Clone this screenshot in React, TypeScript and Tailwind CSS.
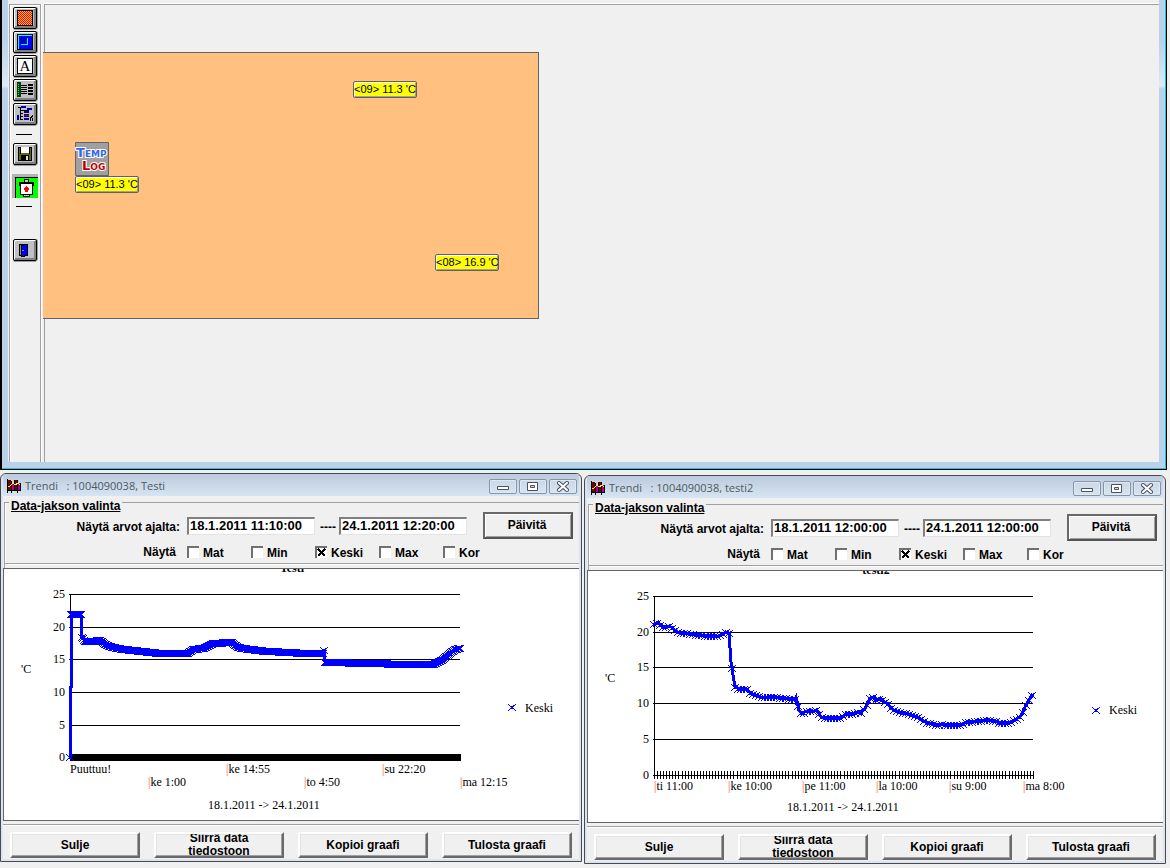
import type { ReactNode } from "react";

type Point = [number, number];

interface AxisLabel {
  x: number;
  y: number;
  text: string;
  tick?: boolean;
}

interface TrendChart {
  title: string;
  grid: number[];
  right: number;
  unitY: number;
  labels: AxisLabel[];
  rangeX: number;
  legendY: number;
  step: number;
  points: Point[];
  denseAxis: boolean;
}

interface Trend {
  id: string;
  name: string;
  from: string;
  to: string;
  chart: TrendChart;
}

const AXIS_VALUES = [25, 20, 15, 10, 5, 0];
const AXIS_LEFT = 66;

const trends: Trend[] = [
  {
    id: "t1",
    name: "Testi",
    from: "18.1.2011 11:10:00",
    to: "24.1.2011 12:20:00",
    chart: {
      title: "Testi",
      grid: [25, 58, 90, 123, 156, 188],
      right: 456,
      unitY: 104,
      rangeX: 204,
      legendY: 138,
      step: 1,
      denseAxis: true,
      labels: [
        { x: 66, y: 204, text: "Puuttuu!" },
        { x: 144, y: 217, text: "ke 1:00", tick: true },
        { x: 222, y: 204, text: "ke 14:55", tick: true },
        { x: 300, y: 217, text: "to 4:50", tick: true },
        { x: 378, y: 204, text: "su 22:20", tick: true },
        { x: 456, y: 217, text: "ma 12:15", tick: true },
      ],
      points: [
        [67, 45], [77, 45], [78, 68], [81, 72], [88, 72], [96, 71], [103, 76], [113, 79],
        [129, 81], [156, 84], [184, 84], [189, 80], [199, 79], [209, 74], [228, 73],
        [234, 78], [246, 80], [263, 82], [286, 83], [299, 84], [319, 84], [320, 81],
        [321, 93], [369, 94], [399, 95], [429, 95], [439, 90], [446, 84], [451, 80], [456, 79],
      ],
    },
  },
  {
    id: "t2",
    name: "testi2",
    from: "18.1.2011 12:00:00",
    to: "24.1.2011 12:00:00",
    chart: {
      title: "testi2",
      grid: [25, 61, 96, 132, 168, 204],
      right: 445,
      unitY: 111,
      rangeX: 199,
      legendY: 139,
      step: 3,
      denseAxis: false,
      labels: [
        { x: 66, y: 219, text: "ti 11:00", tick: true },
        { x: 140, y: 219, text: "ke 10:00", tick: true },
        { x: 214, y: 219, text: "pe 11:00", tick: true },
        { x: 288, y: 219, text: "la 10:00", tick: true },
        { x: 361, y: 219, text: "su 9:00", tick: true },
        { x: 435, y: 219, text: "ma 8:00", tick: true },
      ],
      points: [
        [66, 53], [70, 51], [73, 55], [77, 57], [80, 55], [83, 56], [87, 59], [90, 61],
        [96, 62], [103, 63], [111, 64], [121, 65], [131, 65], [134, 63], [139, 61], [141, 62],
        [143, 91], [147, 116], [151, 118], [159, 118], [163, 123], [168, 124], [173, 126],
        [188, 126], [194, 127], [207, 128], [208, 126], [211, 139], [214, 143], [218, 140],
        [226, 140], [229, 139], [233, 146], [238, 147], [253, 147], [259, 142], [263, 143],
        [269, 141], [273, 142], [278, 136], [282, 127], [285, 126], [288, 129], [292, 127],
        [295, 130], [299, 132], [303, 137], [307, 140], [312, 141], [317, 142], [324, 144],
        [330, 146], [335, 150], [340, 152], [344, 152], [349, 155], [352, 153], [357, 154],
        [372, 154], [379, 151], [389, 150], [399, 149], [407, 150], [412, 152], [420, 152],
        [425, 150], [433, 145], [437, 136], [442, 127], [445, 123],
      ],
    },
  },
];

// Linear interpolation between the logged points, one sample per step.
function sample(points: Point[], step: number): Point[] {
  const out: Point[] = [];
  const end = points[points.length - 1][0];
  let i = 0;
  for (let x = points[0][0]; x <= end; x += step) {
    while (i < points.length - 2 && points[i + 1][0] < x) i++;
    const [x0, y0] = points[i];
    const [x1, y1] = points[i + 1];
    out.push([x, Math.round(y0 + ((y1 - y0) * (x - x0)) / (x1 - x0))]);
  }
  return out;
}

function cross([x, y]: Point) {
  return `M${x - 4} ${y - 3}L${x + 4} ${y + 4}M${x + 4} ${y - 3}L${x - 4} ${y + 4}`;
}

function Chart({ chart }: { chart: TrendChart }) {
  const { grid, right, labels, points } = chart;
  const bottom = grid[grid.length - 1];
  const line = `M${points.map((p) => p.join(" ")).join("L")}`;
  const ticks: string[] = [];
  for (let i = 0; i <= 124; i++) {
    const x = Math.round(AXIS_LEFT + (i * (right - AXIS_LEFT)) / 124) + 0.5;
    ticks.push(`M${x} ${bottom - 4}V${bottom + 4}`);
  }

  return (
    <svg
      viewBox="0 0 575 251"
      className="block w-full bg-white font-['Liberation_Serif',serif] text-[12px] font-normal"
      role="img"
      aria-label={chart.title}
    >
      <text x="288" y="3" textAnchor="middle" fontWeight="bold">
        {chart.title}
      </text>
      <g shapeRendering="crispEdges" fill="none" stroke="#000">
        {grid.map((y) => (
          <path key={y} d={`M${AXIS_LEFT - 1} ${y + 0.5}H${right}`} />
        ))}
        <path d={`M${AXIS_LEFT + 0.5} ${grid[0]}V${bottom}`} />
        {chart.denseAxis ? (
          <path d={`M${AXIS_LEFT} ${bottom + 0.5}H${right + 1}`} strokeWidth="7" />
        ) : (
          <path d={ticks.join("")} />
        )}
      </g>
      <g shapeRendering="crispEdges" fill="none" stroke="#00f">
        {chart.denseAxis && (
          <>
            <path d="M66.5 190V117M67.5 119V44" strokeWidth="3" />
            <path d={cross([66, 188])} />
            <path d="M82 72H88L96 71L103 76L113 79L129 81L156 84H184L189 80L199 79L209 74L228 73L234 78L246 80L263 82L299 84H319M321 93L399 95H429L439 90L446 84" strokeWidth="6" />
          </>
        )}
        <path d={line} strokeWidth="3" />
        <path d={sample(points, chart.step).map(cross).join("")} />
      </g>
      {AXIS_VALUES.map((value, i) => (
        <text key={value} x="61" y={grid[i] + 4} textAnchor="end">
          {value}
        </text>
      ))}
      {labels.map((label) => (
        <text key={label.text} x={label.x} y={label.y}>
          {label.tick && <tspan fill="#f06030">|</tspan>}
          {label.text}
        </text>
      ))}
      <text x="17" y={chart.unitY}>
        'C
      </text>
      <text x={chart.rangeX} y="240">
        {"18.1.2011 -> 24.1.2011"}
      </text>
      <path d={cross([508, chart.legendY])} stroke="#00f" shapeRendering="crispEdges" />
      <text x="521" y="143">
        Keski
      </text>
    </svg>
  );
}

function TrendIcon() {
  return (
    <svg width="14" height="14" viewBox="0 0 14 14" shapeRendering="crispEdges" aria-hidden="true">
      <path fill="#700" d="M1 1h3v11H1z" />
      <path fill="#a0a" d="M5 4h2v8H5zM11 4h2v8h-2z" />
      <path fill="#700" d="M8 1h2v11H8z" />
      <path stroke="#000" d="M.5 0v14M0 11.5h14M4.5 2v12M7.500 1v11M10.500 1v13M13.500 4v8" />
      <path stroke="#ff0" fill="none" d="M1 8l2-1 3-3 2 2 3-2 2 2" />
    </svg>
  );
}

function CaptionButton({ label, children }: { label: string; children: ReactNode }) {
  return (
    <button
      type="button"
      aria-label={label}
      className="flex h-[15px] w-7 items-center justify-center rounded-[2px] border border-[#8793a8] bg-linear-to-b from-[#c9d7e7] to-[#d8e4f1] shadow-[inset_0_0_0_1px_#dfe9f4]"
    >
      <svg width="12" height="11" viewBox="0 0 12 11" aria-hidden="true">
        {children}
      </svg>
    </button>
  );
}

function TitleBar({ name }: { name: string }) {
  return (
    <header className="flex h-[22px] items-center bg-linear-to-b from-[#bccbdd] to-[#d7e4f2] pt-0.5 pr-0.5 pl-1">
      <TrendIcon />
      <h2 className="ml-1 flex-1 font-['Open_Sans',sans-serif] text-[11px] leading-4 font-normal whitespace-pre text-[#4f5963]">
        {`Trendi   : 1004090038, ${name}`}
      </h2>
      <div className="flex gap-0.5">
        <CaptionButton label="Minimize">
          <path fill="#fff" stroke="#4b5160" d="M.5 5.500h11v3H.5z" />
        </CaptionButton>
        <CaptionButton label="Maximize">
          <path fill="#fff" stroke="#4b5160" d="M.5 1.500h10v8H.5z" />
          <path fill="#d0dcea" stroke="#4b5160" d="M3.500 4.500h4v2h-4z" />
        </CaptionButton>
        <CaptionButton label="Close">
          <path stroke="#4b5160" strokeWidth="4" d="M2 2l8 7M10 2l-8 7" strokeLinecap="square" />
          <path stroke="#fff" strokeWidth="2" d="M2 2l8 7M10 2l-8 7" strokeLinecap="square" />
        </CaptionButton>
      </div>
    </header>
  );
}

function DateInput({ label, value }: { label: string; value: string }) {
  return (
    <input
      type="text"
      aria-label={label}
      defaultValue={value}
      className="h-[18px] w-32 border-t-2 border-r border-b border-l-2 border-t-[#808080] border-r-[#e3e3e3] border-b-[#e3e3e3] border-l-[#808080] bg-white px-px pb-0.5 text-[13px] leading-[14px] outline-none"
    />
  );
}

const seriesNames = ["Mat", "Min", "Keski", "Max", "Kor"];

function SeriesCheckbox({ name }: { name: string }) {
  return (
    <label className="flex w-16 items-center gap-1">
      <span className="relative block size-3">
        <input
          type="checkbox"
          defaultChecked={name === "Keski"}
          className="peer block size-3 appearance-none border-t-2 border-l-2 border-[#707070] bg-white"
        />
        <svg
          viewBox="0 0 12 12"
          shapeRendering="crispEdges"
          className="pointer-events-none absolute inset-0 hidden size-3 peer-checked:block"
          aria-hidden="true"
        >
          <path stroke="#000" strokeWidth="2" d="M3 3l7 7M10 3l-7 7" />
        </svg>
      </span>
      <span className="pt-0.5">{name}</span>
    </label>
  );
}

function TrendWindow({ trend, className }: { trend: Trend; className?: string }) {
  return (
    <section
      className={`min-w-0 overflow-hidden rounded-t-md border border-[#4a4a4e] bg-[#dbe4f1] px-0.5 pb-0.5 ${className ?? ""}`}
    >
      <TitleBar name={trend.name} />
      <form className="bg-[#f0f0f0] pb-px" onSubmit={(e) => e.preventDefault()}>
        <fieldset className="ml-px border border-r-0 border-[#a0a0a0] pb-[5px] shadow-[inset_1px_0_0_#fff,0_1px_0_#fff]">
          <legend className="ml-1 h-[13px] px-0.5 pt-1 text-[12px] leading-3 underline">
            Data-jakson valinta
          </legend>
          <div className="mt-[3px] flex items-center pr-1.5">
            <span className="mr-1.5 w-44 pt-0.5 pr-px text-right">Näytä arvot ajalta:</span>
            <DateInput label="Alkaen" value={trend.from} />
            <span className="w-6 pt-0.5 pl-0.5 text-center">----</span>
            <DateInput label="Asti" value={trend.to} />
            <button
              type="submit"
              className="ml-auto h-[27px] w-[90px] border-2 border-t-[#696969] border-r-[#555] border-b-[#555] border-l-[#696969] bg-[#f0f0f0] pr-0.5 pb-0.5 shadow-[inset_1px_1px_0_#fff,inset_-1px_-1px_0_#a0a0a0]"
            >
              Päivitä
            </button>
          </div>
          <div className="mt-[7px] flex h-3 items-center">
            <span className="mr-1.5 w-44 pr-[5px] text-right">Näytä</span>
            {seriesNames.map((name) => (
              <SeriesCheckbox key={name} name={name} />
            ))}
          </div>
        </fieldset>
        <div className="ml-px h-1 border-l border-[#a0a0a0]" />
        <div className="border-t border-b border-l border-[#646464]">
          <Chart chart={trend.chart} />
        </div>
        <div className="mt-[3px] flex justify-between border-t border-[#a0a0a0] px-[7px] pt-[7px] shadow-[inset_0_1px_0_#fff]">
          {["Sulje", "Siirrä data tiedostoon", "Kopioi graafi", "Tulosta graafi"].map((text) => (
            <button
              key={text}
              type="button"
              className="flex h-[26px] w-[130px] items-center justify-center overflow-hidden border-2 border-t-white border-r-[#696969] border-b-[#696969] border-l-white bg-[#f0f0f0] px-4 leading-[13px] shadow-[inset_-1px_-1px_0_#a0a0a0,inset_1px_1px_0_#e3e3e3]"
            >
              <span className="max-w-20">{text}</span>
            </button>
          ))}
        </div>
      </form>
    </section>
  );
}

function ToolButton({ label, children }: { label: string; children: ReactNode }) {
  return (
    <button
      type="button"
      aria-label={label}
      className="flex h-[22px] w-6 items-center justify-center rounded-[2px] border border-black bg-[#c0c0c0] shadow-[inset_1px_1px_0_#fff,inset_-2px_-2px_0_#808080,0_1px_0_#a0a0a0,1px_0_0_#a0a0a0]"
    >
      <svg width="16" height="16" viewBox="0 0 16 16" shapeRendering="crispEdges" aria-hidden="true">
        {children}
      </svg>
    </button>
  );
}

// Red and yellow dither used by the area tool.
const ditherDots = Array.from({ length: 98 }, (_, i) => {
  const y = Math.floor(i / 7);
  return `M${1 + (i % 7) * 2 + (y % 2)} ${y + 1}h1v1h-1z`;
}).join("");

function Toolbar() {
  return (
    <nav
      aria-label="Työkalut"
      className="mt-1 ml-px flex w-8 flex-col items-start border-t border-r border-l border-[#a0a0a0] pt-0.5 pl-[3px] shadow-[inset_1px_1px_0_#fff,1px_0_0_#fff]"
    >
      <div className="flex flex-col gap-0.5">
        <ToolButton label="Alue">
          <path fill="#f00" stroke="#000" d="M.5 .5h15v15H.5z" />
          <path fill="#ffc040" d={ditherDots} />
        </ToolButton>
        <ToolButton label="Kehys">
          <path fill="#00f" stroke="#000" d="M.5 .5h15v15H.5z" />
          <path fill="none" stroke="#0ff" d="M1.500 15V1.500H15" />
          <path fill="#00c" stroke="#008" d="M4.500 4.500h6v6h-6z" />
          <path fill="none" stroke="#0ff" d="M4 10.500h6.500V4" />
        </ToolButton>
        <ToolButton label="Teksti">
          <path fill="#fff" stroke="#000" d="M.5 .5h15v15H.5z" />
          <text x="8" y="13" textAnchor="middle" className="font-['Liberation_Serif',serif] text-[15px] font-normal">
            A
          </text>
        </ToolButton>
        <ToolButton label="Luettelo">
          <path fill="#040" d="M0 0h4v15H0z" />
          <path stroke="#4c8" strokeDasharray="1 1" d="M1.500 2v12" />
          <path stroke="#000" d="M4 3.500h6M4 5.500h6M4 7.500h6M4 9.500h6M4 11.500h6" />
          <path stroke="#000" strokeWidth="2" d="M11 3h6M11 6h6M11 9h6M11 12h6" />
        </ToolButton>
        <ToolButton label="Kaavio">
          <path stroke="#000" fill="none" d="M3.500 1v13M1 1.500h5M3 4.500h9M3 7.500h3M3 10.500h3M3 13.500h3" />
          <path stroke="#00a" strokeWidth="2" d="M4 1h5M10 3h5M7 6h5M7 13h5M1 9v5" />
          <path stroke="#008" d="M7 8.500h5M7 10.500h5" />
          <path stroke="#a00" d="M7 9.500h5" />
          <path stroke="#000" fill="none" d="M13 15c0-3 1-5 4-6M15 15c0-2 1-3 2-3" />
        </ToolButton>
      </div>
      <hr className="mt-[9px] ml-[3px] w-4 border-black" />
      <div className="mt-2">
        <ToolButton label="Tallenna">
          <path fill="#660" stroke="#000" d="M1.500 1.500h13v13h-13z" />
          <path fill="#fff" d="M4 1h8v6H4z" />
          <path fill="#000" d="M4 9h8v6H4zM3 1h1v7H3zM12 1h1v7h-1z" />
          <path fill="#ddd" d="M9 10h2v4H9z" />
        </ToolButton>
      </div>
      <button
        type="button"
        aria-label="Lokitus"
        className="mt-[9px] -ml-px flex h-6 w-[26px] border-t-3 border-l-3 border-[#b4b4b4]"
      >
        <svg width="23" height="21" viewBox="0 0 23 21" shapeRendering="crispEdges" aria-hidden="true">
          <path fill="#0f0" d="M0 0h23v21H0z" />
          <path stroke="#000" fill="none" d="M.5 21V.5H23" />
          <path fill="#ccc" stroke="#000" d="M9.500 2.500h4v3h-4zM8.500 17.500h6v2h-6zM4.500 5.500h14v3h-14z" />
          <path fill="#fff" stroke="#000" d="M5.500 6.500h12v11h-12z" />
          <path fill="#f00" d="M11 9h1v1h1v1h1v2h-1v2h-3v-2H9v-2h1v-1h1z" />
        </svg>
      </button>
      <hr className="mt-2 ml-[3px] w-4 border-black" />
      <div className="mt-8">
        <ToolButton label="Poistu">
          <path fill="#888" stroke="#000" d="M2.500 2.500h8v11h-8z" />
          <path fill="#00f" stroke="#000" d="M4.500 3.500l6-1v11l-6 1z" />
          <path fill="#88f" d="M5 8h2v1H5z" />
        </ToolButton>
      </div>
    </nav>
  );
}

function Sensor({ text, className }: { text: string; className: string }) {
  return (
    <div
      className={`absolute h-[17px] w-16 overflow-hidden rounded-[2px] border border-[#606060] bg-[#ff0] text-[11px] leading-[15px] font-normal whitespace-nowrap shadow-[inset_1px_1px_0_#fff,inset_-1px_-1px_0_#a0a0a0] ${className}`}
    >
      {text}
    </div>
  );
}

function FloorPlan() {
  return (
    <div className="absolute top-[52px] -left-px h-[267px] w-[496px] border-t border-r border-b border-[#646464] bg-[#ffc080]">
      <Sensor text="<09> 11.3 'C" className="top-7 left-[310px]" />
      <Sensor text="<09> 11.3 'C" className="top-[123px] left-8" />
      <Sensor text="<08> 16.9 'C" className="top-[201px] left-98" />
      <svg
        viewBox="0 0 34 34"
        role="img"
        aria-label="TempLog"
        className="absolute top-[89px] left-8 size-[34px] font-['DejaVu_Sans',sans-serif] font-bold"
      >
        <path fill="#a0a0a0" stroke="#646464" d="M.5 .5h33v33H.5z" />
        <g stroke="#fff" strokeWidth="2" paintOrder="stroke">
          <text x="1" y="15" fill="#36e" fontSize="13">
            T<tspan fontSize="9">EMP</tspan>
          </text>
          <text x="7" y="28" fill="#b00" fontSize="13">
            L<tspan fontSize="9">OG</tspan>
          </text>
        </g>
      </svg>
    </div>
  );
}

const glass =
  "bg-[linear-gradient(#b9d1ea_0,#b9d1ea_40px,#dce9f6_86px,#b9d1ea_89px)]";

export default function App() {
  return (
    <div className="flex min-h-screen flex-col bg-[#f0f0f0] pb-1 font-['Liberation_Sans',sans-serif] text-[12px] leading-[14px] font-bold text-black">
      <main className={`mr-[3px] flex min-h-[470px] flex-1 border-r border-b border-l-2 border-black ${glass}`}>
        <div className="flex flex-1 border-r border-b border-[#17c7e0] pr-1.5 pb-1.5 pl-1.5">
          <div className="flex flex-1 bg-[#f0f0f0]">
            <Toolbar />
            <div className="relative ml-[3px] flex flex-1 flex-col pt-1">
              <div className="flex-1 border-t border-l border-[#a0a0a0] shadow-[0_-1px_0_#fff]" />
              <FloorPlan />
            </div>
          </div>
        </div>
      </main>
      <div className="mt-[3px] grid grid-cols-2 items-start gap-0.5 pr-1">
        <TrendWindow trend={trends[0]} />
        <TrendWindow trend={trends[1]} className="mt-0.5" />
      </div>
    </div>
  );
}
